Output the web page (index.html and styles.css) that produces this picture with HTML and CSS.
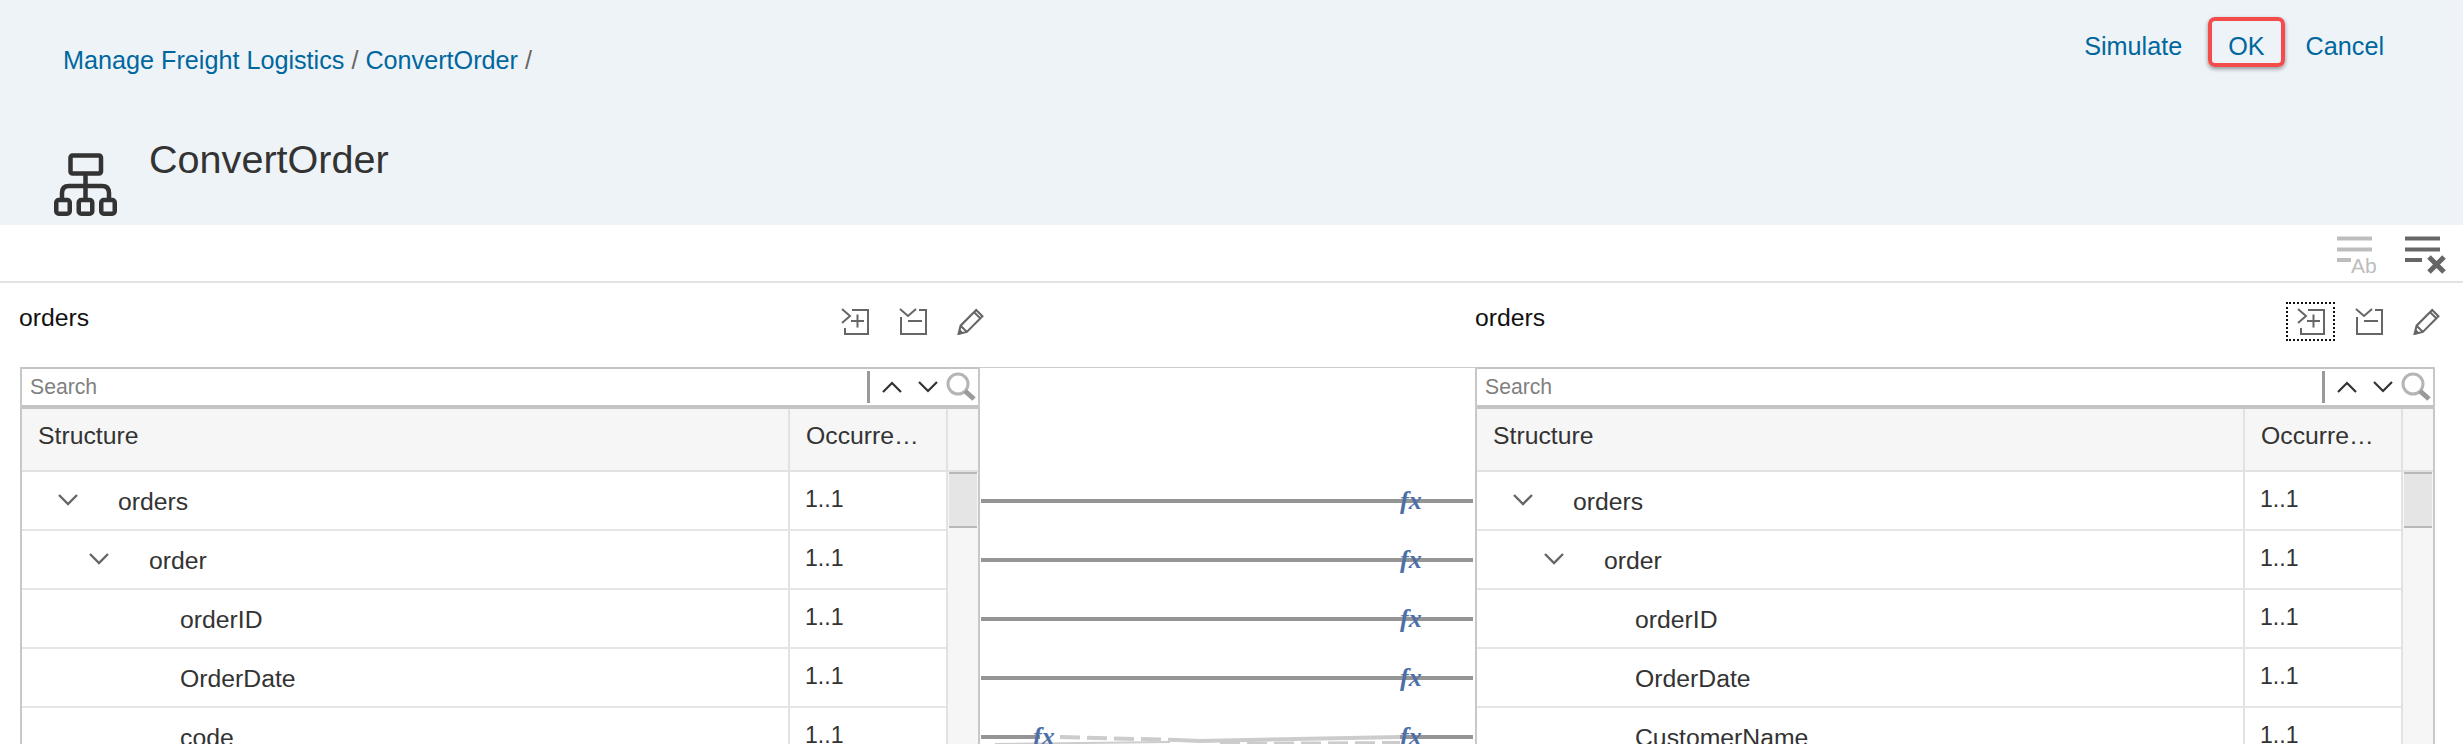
FILE: index.html
```html
<!DOCTYPE html>
<html>

<head>
    <meta charset="UTF-8">
    <title>ConvertOrder</title>
    <link rel="stylesheet" href="styles.css">
</head>

<body>
    <svg class="defs" width="0" height="0">
        <symbol id="i-expand" viewBox="0 0 28 27">
            <path d="M1 1l8 7-8 7M4 20v6h23V2h-16M10 13h13M16.500 6.500v13" fill="none" stroke="currentColor" stroke-width="2" />
        </symbol>
        <symbol id="i-collapse" viewBox="0 0 28 27">
            <path d="M1 1l8 7 8-7M20 2h7v24H2V9M9 13h14" fill="none" stroke="currentColor" stroke-width="2" />
        </symbol>
        <symbol id="i-pencil" viewBox="0 0 26 26">
            <path d="M1 25l2-8L18 2l6 6L9 23zM3 17l6 6M16 4l6 6" fill="none" stroke="currentColor" stroke-width="2" />
            <path d="M1 25l1-5 4 4z" fill="currentColor" />
        </symbol>
        <symbol id="i-up" viewBox="0 0 20 12">
            <path d="M1 11l9-9 9 9" fill="none" stroke="currentColor" stroke-width="2.200" />
        </symbol>
        <symbol id="i-down" viewBox="0 0 20 12">
            <path d="M1 1l9 9 9-9" fill="none" stroke="currentColor" stroke-width="2.200" />
        </symbol>
        <symbol id="i-search" viewBox="0 0 30 30">
            <circle cx="12" cy="12" r="10" fill="none" stroke="#b5b5b5" stroke-width="3" />
            <path d="M19 19l9 8" fill="none" stroke="#9a9a9a" stroke-width="5" />
        </symbol>
        <symbol id="i-tree" viewBox="0 0 20 12">
            <path d="M1 1l9 9 9-9" fill="none" stroke="currentColor" stroke-width="2.400" />
        </symbol>
    </svg>

    <header class="page-head">
        <div class="head-top">
            <nav class="crumbs">
                <a>Manage Freight Logistics</a> <span>/</span> <a>ConvertOrder</a> <span>/</span>
            </nav>
            <div class="actions">
                <a class="action">Simulate</a>
                <a class="action action-ok">OK</a>
                <a class="action">Cancel</a>
            </div>
        </div>
        <div class="head-title">
            <svg class="flow-icon" viewBox="0 0 63 63">
                <rect x="16.500" y="2.500" width="30.500" height="18" rx="2" fill="none" stroke="#333" stroke-width="4.500" />
                <path d="M31.500 20v25M8 46v-6q0-7 7-7h33q7 0 7 7v6" fill="none" stroke="#333" stroke-width="4.500" />
                <rect x="2.250" y="47" width="13.500" height="13.750" rx="2.500" fill="none" stroke="#333" stroke-width="4.500" />
                <rect x="24.750" y="47" width="13.500" height="13.750" rx="2.500" fill="none" stroke="#333" stroke-width="4.500" />
                <rect x="47.250" y="47" width="13.500" height="13.750" rx="2.500" fill="none" stroke="#333" stroke-width="4.500" />
            </svg>
            <h1>ConvertOrder</h1>
        </div>
    </header>

    <div class="toolbar">
        <svg class="tool-icon tool-off" viewBox="0 0 44 42">
            <path d="M1 3.500h35M1 14.500h35M1 25h14" fill="none" stroke="currentColor" stroke-width="4" />
            <text x="15" y="38" class="tool-ab">Ab</text>
        </svg>
        <svg class="tool-icon" viewBox="0 0 44 42">
            <path d="M1 3.500h35M1 14.500h35M1 25h17" fill="none" stroke="currentColor" stroke-width="4" />
            <path d="M25 22l15 15M40 22L25 37" fill="none" stroke="currentColor" stroke-width="5" />
        </svg>
    </div>

    <main class="mapping">
        <section class="panel panel-left">
            <div class="panel-title">
                <span class="panel-name">orders</span>
                <div class="panel-tools">
                    <span class="tool-btn"><svg><use href="#i-expand" /></svg></span>
                    <span class="tool-btn"><svg><use href="#i-collapse" /></svg></span>
                    <span class="tool-btn"><svg><use href="#i-pencil" /></svg></span>
                </div>
            </div>
            <div class="tree-table">
                <div class="search">
                    <input class="search-input" placeholder="Search">
                    <span class="search-sep"></span>
                    <svg class="search-arrow"><use href="#i-up" /></svg>
                    <svg class="search-arrow"><use href="#i-down" /></svg>
                    <svg class="search-glass"><use href="#i-search" /></svg>
                </div>
                <div class="table-head">
                    <div class="col-name">Structure</div>
                    <div class="col-occ">Occurre…</div>
                    <div class="col-bar"></div>
                </div>
                <div class="table-body">
                    <div class="rows">
                        <div class="row">
                            <div class="col-name lvl-0"><svg class="twisty"><use href="#i-tree" /></svg>orders</div>
                            <div class="col-occ">1..1</div>
                        </div>
                        <div class="row">
                            <div class="col-name lvl-1"><svg class="twisty"><use href="#i-tree" /></svg>order</div>
                            <div class="col-occ">1..1</div>
                        </div>
                        <div class="row">
                            <div class="col-name lvl-2">orderID</div>
                            <div class="col-occ">1..1</div>
                        </div>
                        <div class="row">
                            <div class="col-name lvl-2">OrderDate</div>
                            <div class="col-occ">1..1</div>
                        </div>
                        <div class="row">
                            <div class="col-name lvl-2">code</div>
                            <div class="col-occ">1..1</div>
                        </div>
                    </div>
                    <div class="scrollbar"><div class="thumb"></div></div>
                </div>
            </div>
        </section>

        <section class="links">
            <svg class="links-map" viewBox="0 0 495 376">
                <path class="link" d="M1 133H493M1 192H493M1 251H493M1 310H493M1 369H60M418 369H493" />
                <path class="link-soft" d="M197 372L220 373L420 369" />
                <path class="link-soft link-thin" d="M15 376L190 374" />
                <path class="link-dash" d="M80 369L197 372M240 376L420 375" />
                <text class="fx" x="420" y="141">fx</text>
                <text class="fx" x="420" y="200">fx</text>
                <text class="fx" x="420" y="259">fx</text>
                <text class="fx" x="420" y="318">fx</text>
                <text class="fx" x="53" y="377">fx</text>
                <text class="fx" x="420" y="377">fx</text>
            </svg>
        </section>

        <section class="panel panel-right">
            <div class="panel-title">
                <span class="panel-name">orders</span>
                <div class="panel-tools">
                    <span class="tool-btn tool-focus"><svg><use href="#i-expand" /></svg></span>
                    <span class="tool-btn"><svg><use href="#i-collapse" /></svg></span>
                    <span class="tool-btn"><svg><use href="#i-pencil" /></svg></span>
                </div>
            </div>
            <div class="tree-table">
                <div class="search">
                    <input class="search-input" placeholder="Search">
                    <span class="search-sep"></span>
                    <svg class="search-arrow"><use href="#i-up" /></svg>
                    <svg class="search-arrow"><use href="#i-down" /></svg>
                    <svg class="search-glass"><use href="#i-search" /></svg>
                </div>
                <div class="table-head">
                    <div class="col-name">Structure</div>
                    <div class="col-occ">Occurre…</div>
                    <div class="col-bar"></div>
                </div>
                <div class="table-body">
                    <div class="rows">
                        <div class="row">
                            <div class="col-name lvl-0"><svg class="twisty"><use href="#i-tree" /></svg>orders</div>
                            <div class="col-occ">1..1</div>
                        </div>
                        <div class="row">
                            <div class="col-name lvl-1"><svg class="twisty"><use href="#i-tree" /></svg>order</div>
                            <div class="col-occ">1..1</div>
                        </div>
                        <div class="row">
                            <div class="col-name lvl-2">orderID</div>
                            <div class="col-occ">1..1</div>
                        </div>
                        <div class="row">
                            <div class="col-name lvl-2">OrderDate</div>
                            <div class="col-occ">1..1</div>
                        </div>
                        <div class="row">
                            <div class="col-name lvl-2">CustomerName</div>
                            <div class="col-occ">1..1</div>
                        </div>
                    </div>
                    <div class="scrollbar"><div class="thumb"></div></div>
                </div>
            </div>
        </section>
    </main>
</body>

</html>
```

FILE: styles.css
```css
html {
    height: 100%;
}

body {
    height: 100%;
    margin: 0;
    overflow: hidden;
    font: 24.750px/1.2 "Liberation Sans", Arial, sans-serif;
    color: #333333;
    background-color: #ffffff;
}

a {
    color: #00679e;
}

h1 {
    margin: 0;
    font-size: 39.600px;
    line-height: 48px;
    font-weight: normal;
}

.defs {
    display: block;
    height: 0;
}

.page-head {
    height: 225px;
    background-color: #eef3f8;
    display: flex;
    flex-direction: column;
}

.head-top {
    display: flex;
    justify-content: space-between;
    padding: 17px 79px 0 63px;
    font-size: 25.200px;
}

.crumbs {
    padding-top: 28px;
    color: #666666;
}

.actions {
    display: flex;
    align-items: flex-start;
    gap: 21px;
}

.action {
    height: 50px;
    line-height: 58px;
    box-sizing: border-box;
}

.action-ok {
    line-height: 50px;
    margin-left: 5px;
    border: 4px solid #f44b4b;
    border-radius: 7px;
    box-shadow: 0 2px 4px rgba(0, 0, 0, 0.4);
    padding: 0 16px;
}

.head-title {
    display: flex;
    align-items: flex-start;
    padding: 60px 0 0 54px;
}

.flow-icon {
    width: 63px;
    height: 63px;
    margin-top: 18px;
}

.head-title h1 {
    margin-left: 32px;
}

.toolbar {
    height: 46px;
    border-bottom: 2px solid #e2e2e2;
    display: flex;
    justify-content: flex-end;
    align-items: flex-start;
    gap: 24px;
    padding: 10px 15px 0 0;
    color: #666666;
}

.tool-icon {
    width: 44px;
    height: 42px;
    overflow: visible;
}

.tool-off {
    color: #bdbdbd;
}

.tool-ab {
    font-size: 21px;
    fill: #bdbdbd;
}

.mapping {
    display: grid;
    grid-template-columns: 980px 495px 988px;
}

.panel {
    padding-left: 20px;
}

.panel-right {
    padding-left: 0;
    padding-right: 28px;
}

.panel-title {
    height: 84px;
    display: flex;
    justify-content: space-between;
}

.panel-name {
    padding-top: 20px;
    color: #111111;
}

.panel-left .panel-name {
    margin-left: -1px;
}

.panel-tools {
    display: flex;
    gap: 30px;
    padding-top: 25px;
    margin-right: -5px;
}

.panel-right .panel-tools {
    margin-right: -6px;
}

.tool-btn {
    position: relative;
    width: 28px;
    height: 27px;
    color: #666666;
}

.tool-btn svg {
    display: block;
    width: 100%;
    height: 100%;
}

.tool-focus::after {
    content: "";
    position: absolute;
    left: -11px;
    top: -6px;
    width: 49px;
    height: 39px;
    box-sizing: border-box;
    border: 2px dotted #111111;
}

.tree-table {
    border-left: 2px solid #c8c8c8;
    border-right: 2px solid #c8c8c8;
    height: 377px;
    overflow: hidden;
}

.search {
    height: 36px;
    border-top: 2px solid #c4c4c4;
    border-bottom: 4px solid #c4c4c4;
    display: flex;
    align-items: center;
}

.search-input {
    flex: 1;
    min-width: 0;
    border: 0;
    padding: 0 0 0 8px;
    font: 21.200px "Liberation Sans", Arial, sans-serif;
    background: none;
    outline: none;
}

.search-input::placeholder {
    color: #808080;
}

.search-sep {
    width: 3px;
    height: 32px;
    background-color: #999999;
    margin-right: 12px;
}

.search-arrow {
    width: 20px;
    height: 12px;
    margin-right: 16px;
    color: #333333;
}

.search-glass {
    width: 30px;
    height: 30px;
    margin-left: -8px;
    margin-right: 2px;
}

.table-head {
    height: 61px;
    display: flex;
    background-color: #f6f6f6;
    border-bottom: 2px solid #e2e2e2;
}

.col-name {
    flex: 1;
    min-width: 0;
    padding-left: 16px;
    display: flex;
    align-items: center;
    white-space: nowrap;
}

.col-occ {
    width: 158px;
    box-sizing: border-box;
    border-left: 2px solid #e2e2e2;
    padding-left: 16px;
    display: flex;
    align-items: center;
}

.col-bar {
    width: 30px;
    border-left: 2px solid #e2e2e2;
}

.table-head .col-name,
.table-head .col-occ {
    padding-bottom: 8px;
}

.table-body {
    display: flex;
}

.rows {
    flex: 1;
    min-width: 0;
}

.row {
    height: 57px;
    display: flex;
    border-bottom: 2px solid #e5e5e5;
}

.row .col-name {
    padding-top: 2px;
}

.row .col-occ {
    font-size: 23.100px;
    padding-left: 15px;
    padding-bottom: 2px;
}

.row .lvl-0 {
    padding-left: 36px;
}

.row .lvl-1 {
    padding-left: 67px;
}

.row .lvl-2 {
    padding-left: 158px;
}

.twisty {
    width: 20px;
    height: 12px;
    margin-right: 40px;
    margin-top: -4px;
    color: #666666;
}

.scrollbar {
    width: 32px;
    background-color: #f6f6f6;
    border-left: 2px solid #e2e2e2;
    box-sizing: border-box;
    padding: 0 1px;
}

.thumb {
    height: 52px;
    background-color: #e5e5e5;
    border-top: 2px solid #b9b9b9;
    border-bottom: 2px solid #b9b9b9;
}

.links {
    padding-top: 84px;
}

.links-map {
    display: block;
    width: 495px;
    height: 377px;
    border-top: 1px solid #cccccc;
    box-sizing: border-box;
}

.link {
    fill: none;
    stroke: #959595;
    stroke-width: 4;
}

.link-soft {
    fill: none;
    stroke: #cccccc;
    stroke-width: 4;
}

.link-thin {
    stroke-width: 2;
}

.link-dash {
    fill: none;
    stroke: #cccccc;
    stroke-width: 4;
    stroke-dasharray: 20 7;
}

.fx {
    font: italic bold 26px "Liberation Serif", serif;
    fill: #4d6fa8;
}
```
